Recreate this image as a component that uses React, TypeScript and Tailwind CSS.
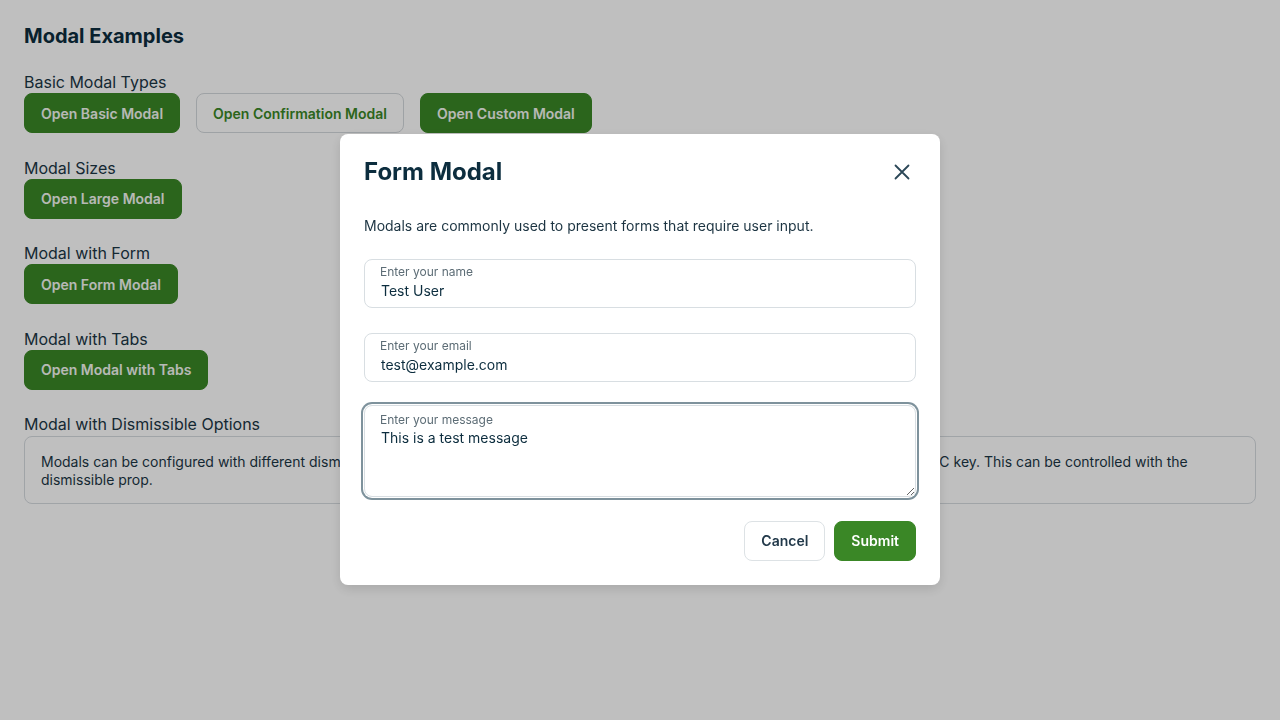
import { useState } from "react"

const INK = "#0c2d3e"
const GREEN = "#3a8726"

const sections = [
  { label: "Basic Modal Types", buttons: ["Open Basic Modal", "Open Confirmation Modal", "Open Custom Modal"] },
  { label: "Modal Sizes", buttons: ["Open Large Modal"] },
  { label: "Modal with Form", buttons: ["Open Form Modal"] },
  { label: "Modal with Tabs", buttons: ["Open Modal with Tabs"] },
]

function PageButton({ text }: { text: string }) {
  const outline = text === "Open Confirmation Modal"
  return (
    <button
      className={`h-10 rounded-lg border px-4 pt-px text-sm font-semibold ${
        outline ? "border-[#d3d8dc] bg-white text-[#3a8726]" : "border-[#3a8726] bg-[#3a8726] text-[#f4f7f2]"
      }`}
    >
      {text}
    </button>
  )
}

export default function App() {
  const [name, setName] = useState("Test User")
  const [email, setEmail] = useState("test@example.com")
  const [message, setMessage] = useState("This is a test message")

  return (
    <div className="min-h-screen bg-white px-6 pt-[22px]" style={{ fontFamily: "Inter, 'Noto Sans', sans-serif", color: INK }}>
      <h1 className="mb-[20px] text-xl leading-7 font-bold">Modal Examples</h1>

      {sections.map((s) => (
        <div key={s.label} className="mb-[22.5px]">
          <div className="text-base leading-6 text-[#1b3645]">{s.label}</div>
          <div className="-mt-px flex gap-4">
            {s.buttons.map((b) => (
              <PageButton key={b} text={b} />
            ))}
          </div>
        </div>
      ))}

      <div>
        <div className="text-base leading-6 text-[#1b3645]">Modal with Dismissible Options</div>
        <div className="rounded-lg border border-[#d6dbdf] px-4 pt-4 pb-[14px] text-sm leading-[18px] text-[#1b3645]">
          Modals can be configured with different dismissible options. By default, modals can be closed by clicking the
          overlay or pressing the ESC key. This can be controlled with the dismissible prop.
        </div>
      </div>

      {/* overlay + dialog */}
      <div className="fixed inset-0 bg-black/25">
        <div className="mx-auto mt-[134px] w-[600px] rounded-lg bg-white px-6 pt-6 pb-6 shadow-[0_4px_12px_rgba(0,0,0,0.12)]">
          <div className="flex items-center justify-between">
            <h2 className="text-2xl leading-7 font-bold" style={{ color: INK }}>
              Form Modal
            </h2>
            <button className="flex h-7 w-7 items-center justify-center" aria-label="Close">
              <svg width="16" height="16" viewBox="0 0 16 16" fill="none" stroke="#2b4757" strokeWidth="1.8" strokeLinecap="round">
                <path d="M1.5 1.5l13 13M14.5 1.5l-13 13" />
              </svg>
            </button>
          </div>

          <p className="mt-[30px] mb-[23px] text-sm leading-5 text-[#1c3442]">
            Modals are commonly used to present forms that require user input.
          </p>

          <div className="flex flex-col gap-[25px]">
            <div className="relative">
              <label className="absolute top-[5px] left-4 text-xs leading-4 text-[#5d6d76]">Enter your name</label>
              <input
                value={name}
                onChange={(e) => setName(e.target.value)}
                className="h-[49px] w-full rounded-lg border border-[#d8dee2] bg-white px-4 pt-[20px] pb-[7px] text-sm leading-5 outline-none"
                style={{ color: INK }}
              />
            </div>
            <div className="relative">
              <label className="absolute top-[5px] left-4 text-xs leading-4 text-[#5d6d76]">Enter your email</label>
              <input
                value={email}
                onChange={(e) => setEmail(e.target.value)}
                className="h-[49px] w-full rounded-lg border border-[#d8dee2] bg-white px-4 pt-[20px] pb-[7px] text-sm leading-5 outline-none"
                style={{ color: INK }}
              />
            </div>
            <div className="relative -mt-[2px]">
              <label className="absolute top-[7px] left-4 z-10 text-xs leading-4 text-[#5d6d76]">Enter your message</label>
              <textarea
                value={message}
                onChange={(e) => setMessage(e.target.value)}
                className="block h-[92px] w-full rounded-lg border border-[#d8dee2] bg-white px-4 pt-[22px] pb-2 text-sm leading-5 ring-2 ring-[#7e929c] ring-offset-1 outline-none"
                style={{ color: INK }}
              />
            </div>
          </div>

          <div className="mt-6 flex justify-end gap-[9px]">
            <button className="h-10 rounded-lg border border-[#dde2e5] bg-white px-4 text-sm font-semibold text-[#22394a]">
              Cancel
            </button>
            <button
              className="h-10 rounded-lg border px-4 text-sm font-semibold text-white"
              style={{ backgroundColor: GREEN, borderColor: GREEN }}
            >
              Submit
            </button>
          </div>
        </div>
      </div>
    </div>
  )
}
